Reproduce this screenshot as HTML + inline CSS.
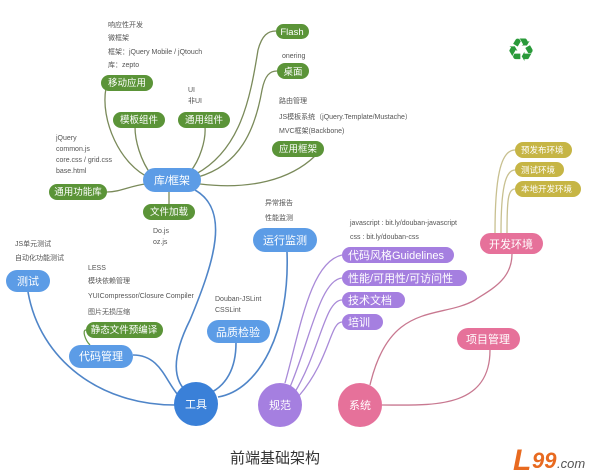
<!DOCTYPE html>
<html><head><meta charset="utf-8"><style>
body{margin:0;background:#fff;}
svg{display:block;font-family:"Liberation Sans","Noto Sans CJK SC",sans-serif;}
.s{font-size:7px;fill:#555;}
.w{fill:#fff;font-size:9.5px;text-anchor:middle;}
</style></head><body>
<svg width="590" height="475" viewBox="0 0 590 475">
<g fill="none" stroke-width="1.3">
<g stroke="#7a8a5a">
<path d="M150 178 C120 165 100 120 106 88"/>
<path d="M152 176 C140 160 135 140 135 127"/>
<path d="M190 172 C200 160 206 140 205 127"/>
<path d="M196 174 C240 150 250 100 258 50 C262 35 268 31 276 31"/>
<path d="M198 177 C240 165 255 130 262 90 C265 75 270 71 277 71"/>
<path d="M200 184 C250 190 290 180 315 156"/>
<path d="M145 184 C130 186 120 192 107 192"/>
<path d="M169 192 L169 204"/>
</g>
<g stroke="#4f85c8" stroke-width="1.6">
<path d="M195 190 C230 210 215 260 190 320 C170 360 175 380 185 390"/>
<path d="M287 252 C290 330 260 390 218 397"/>
<path d="M28 292 C40 360 100 405 175 405"/>
<path d="M133 355 C160 355 165 380 178 395"/>
<path d="M236 343 C236 370 225 385 212 392"/>
</g>
<path d="M90 345 C85 340 82 330 86 330" stroke="#6a9a4a"/>
<g stroke="#a98ad8">
<path d="M285 383 C300 330 310 262 342 255"/>
<path d="M290 387 C310 340 320 280 342 278"/>
<path d="M295 392 C320 350 325 300 342 300"/>
<path d="M298 397 C330 360 330 322 342 322"/>
</g>
<g stroke="#c87890">
<path d="M370 385 C390 300 440 320 475 300 C490 290 512 280 512 254"/>
<path d="M382 405 C430 405 490 410 490 350"/>
</g>
<g stroke="#c8c090">
<path d="M495 233 C495 180 500 150 515 150"/>
<path d="M501 233 C501 190 505 170 515 170"/>
<path d="M507 233 C507 200 508 189 515 189"/>
</g>
</g>
<g fill="#5b9438">
<rect x="101" y="75" width="52" height="16" rx="8"/>
<rect x="113" y="112" width="52" height="16" rx="8"/>
<rect x="178" y="112" width="52" height="16" rx="8"/>
<rect x="49" y="184" width="58" height="16" rx="8"/>
<rect x="143" y="204" width="52" height="16" rx="8"/>
<rect x="276" y="24" width="33" height="15" rx="7.5"/>
<rect x="277" y="63" width="32" height="16" rx="8"/>
<rect x="272" y="141" width="52" height="16" rx="8"/>
<rect x="86" y="322" width="77" height="16" rx="8"/>
</g>
<g class="w">
<text x="127" y="86">移动应用</text>
<text x="139" y="123">模板组件</text>
<text x="204" y="123">通用组件</text>
<text x="78" y="195">通用功能库</text>
<text x="169" y="215">文件加载</text>
<text x="292" y="35">Flash</text>
<text x="293" y="75">桌面</text>
<text x="298" y="152">应用框架</text>
<text x="124" y="333">静态文件预编译</text>
</g>
<g fill="#5c9ce6">
<rect x="143" y="168" width="58" height="24" rx="12"/>
<rect x="253" y="228" width="64" height="24" rx="12"/>
<rect x="6" y="270" width="44" height="22" rx="11"/>
<rect x="69" y="345" width="64" height="23" rx="11.5"/>
<rect x="207" y="320" width="63" height="23" rx="11.5"/>
</g>
<circle cx="196" cy="404" r="22" fill="#3a80d8"/>
<g fill="#a57fe0">
<rect x="342" y="247" width="112" height="16" rx="8"/>
<rect x="342" y="270" width="125" height="16" rx="8"/>
<rect x="342" y="292" width="63" height="16" rx="8"/>
<rect x="342" y="314" width="41" height="16" rx="8"/>
<circle cx="280" cy="405" r="22"/>
</g>
<g fill="#e6719a">
<circle cx="360" cy="405" r="22"/>
<rect x="480" y="233" width="63" height="21" rx="10.5"/>
<rect x="457" y="328" width="63" height="22" rx="11"/>
</g>
<g fill="#c6b545">
<rect x="515" y="142" width="57" height="16" rx="8"/>
<rect x="515" y="162" width="49" height="15" rx="7.5"/>
<rect x="515" y="181" width="66" height="16" rx="8"/>
</g>
<g class="w" style="font-size:11px">
<text x="172" y="184">库/框架</text>
<text x="285" y="244">运行监测</text>
<text x="28" y="285">测试</text>
<text x="101" y="360">代码管理</text>
<text x="238" y="336">品质检验</text>
<text x="196" y="408">工具</text>
<text x="280" y="409">规范</text>
<text x="360" y="409">系统</text>
<text x="511" y="248">开发环境</text>
<text x="488" y="343">项目管理</text>
</g>
<g fill="#fff" font-size="11">
<text x="348" y="259">代码风格Guidelines</text>
<text x="348" y="282">性能/可用性/可访问性</text>
<text x="348" y="304">技术文档</text>
<text x="348" y="326">培训</text>
</g>
<g fill="#fff" font-size="8.5">
<text x="521" y="153">预发布环境</text>
<text x="521" y="173">测试环境</text>
<text x="521" y="192">本地开发环境</text>
</g>
<g class="s">
<text x="108" y="27">响应性开发</text>
<text x="108" y="40">微框架</text>
<text x="108" y="54">框架：jQuery Mobile / jQtouch</text>
<text x="108" y="67">库：zepto</text>
<text x="188" y="92">UI</text>
<text x="188" y="103">非UI</text>
<text x="56" y="140">jQuery</text>
<text x="56" y="151">common.js</text>
<text x="56" y="162">core.css / grid.css</text>
<text x="56" y="173">base.html</text>
<text x="153" y="233">Do.js</text>
<text x="153" y="244">oz.js</text>
<text x="282" y="58">onering</text>
<text x="279" y="103">路由管理</text>
<text x="279" y="119">JS模板系统（jQuery.Template/Mustache）</text>
<text x="279" y="133">MVC框架(Backbone)</text>
<text x="265" y="205">异常报告</text>
<text x="265" y="220">性能监测</text>
<text x="350" y="225">javascript : bit.ly/douban-javascript</text>
<text x="350" y="239">css : bit.ly/douban-css</text>
<text x="15" y="246">JS单元测试</text>
<text x="15" y="260">自动化功能测试</text>
<text x="88" y="270">LESS</text>
<text x="88" y="283">模块依赖管理</text>
<text x="88" y="298">YUICompressor/Closure Compiler</text>
<text x="88" y="314">图片无损压缩</text>
<text x="215" y="301">Douban-JSLint</text>
<text x="215" y="312">CSSLint</text>
</g>
<text x="521" y="61" font-size="32" fill="#2a9a3a" text-anchor="middle" font-family="DejaVu Sans">♻</text>
<text x="230" y="463" font-size="15" fill="#333">前端基础架构</text>
<text x="513" y="470" font-size="30" font-weight="bold" font-style="italic" fill="#e86a20">L</text>
<text x="532" y="468" font-size="22" font-weight="bold" font-style="italic" fill="#e86a20">99</text>
<text x="557" y="468" font-size="13" font-style="italic" fill="#555">.com</text>
</svg>
</body></html>
